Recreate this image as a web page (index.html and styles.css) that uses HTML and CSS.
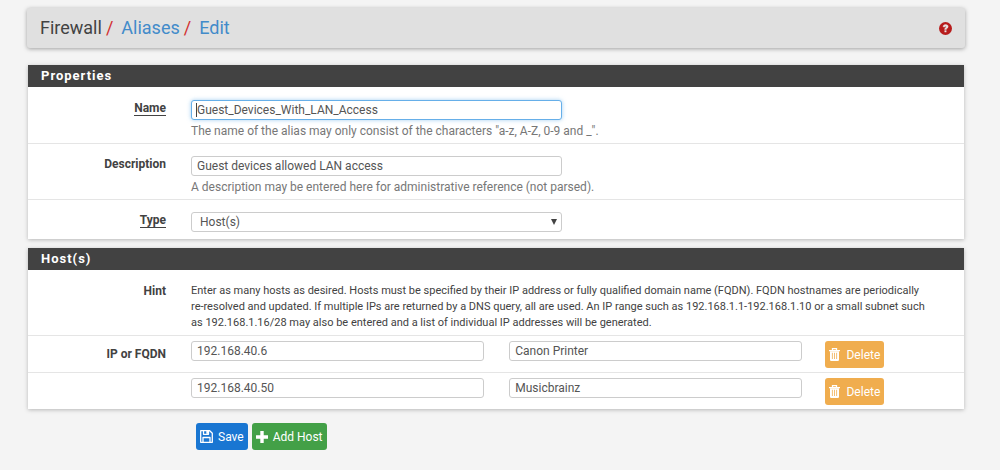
FILE: index.html
```html
<!DOCTYPE html>
<html lang="en">
<head>
<meta charset="utf-8">
<title>Firewall: Aliases: Edit</title>
<link rel="stylesheet" href="styles.css">
</head>
<body>
<header class="page-header">
  <nav class="breadcrumb" aria-label="Breadcrumb">
    <span>Firewall</span><span class="sep">/</span><a href="#">Aliases</a><span class="sep">/</span><a href="#">Edit</a>
  </nav>
  <a class="help-link" href="#" aria-label="Help">
    <svg viewBox="0 0 14 14" width="13" height="13"><circle cx="7" cy="7" r="7" fill="#b71c1c"/><path d="M4.300 5.200C4.500 3.600 5.600 2.700 7.100 2.700c1.600 0 2.800.9 2.800 2.300 0 1.700-2 1.700-2 3.100H6C6 6.300 7.700 6.200 7.700 5.200c0-.8-1.200-.8-1.500.3z" fill="#e8e4e4" stroke="#e8e4e4" stroke-width=".4"/><rect x="5.900" y="9" width="2.100" height="2" fill="#e8e4e4"/></svg>
  </a>
</header>
<form class="alias-form">
  <section class="panel">
    <h2 class="panel-title">Properties</h2>
    <div class="row">
      <label class="label required" for="name"><span>Name</span></label>
      <div class="cell">
        <input class="control active" id="name" type="text" value="Guest_Devices_With_LAN_Access">
      </div>
      <p class="help">The name of the alias may only consist of the characters "a-z, A-Z, 0-9 and _".</p>
    </div>
    <div class="row">
      <label class="label" for="descr">Description</label>
      <div class="cell">
        <input class="control" id="descr" type="text" value="Guest devices allowed LAN access">
      </div>
      <p class="help">A description may be entered here for administrative reference (not parsed).</p>
    </div>
    <div class="row type-row">
      <label class="label required" for="type"><span>Type</span></label>
      <div class="cell">
        <select class="control select" id="type"><option>Host(s)</option></select>
      </div>
    </div>
  </section>
  <section class="panel">
    <h2 class="panel-title">Host(s)</h2>
    <div class="row">
      <div class="label">Hint</div>
      <p class="hint">Enter as many hosts as desired. Hosts must be specified by their IP address or fully qualified domain name (FQDN). FQDN hostnames are periodically re-resolved and updated. If multiple IPs are returned by a DNS query, all are used. An IP range such as 192.168.1.1-192.168.1.10 or a small subnet such as 192.168.1.16/28 may also be entered and a list of individual IP addresses will be generated.</p>
    </div>
    <div class="row host-row">
      <label class="label" for="address0">IP or FQDN</label>
      <div class="cell"><input class="control" id="address0" type="text" value="192.168.40.6"></div>
      <div class="cell"><input class="control" type="text" aria-label="Description of host 1" value="Canon Printer"></div>
      <div class="row-action">
        <button class="btn btn-delete" type="button"><svg viewBox="0 0 11 13" width="11" height="13"><path d="M3.500 2V.6h4V2M0 2.600h11" fill="none" stroke="#fff" stroke-width="1.300"/><path d="M1 3.200h9v8.600q0 1.200-1.200 1.200H2.200Q1 13 1 11.800z" fill="#fff"/><path d="M3.400 4.800v6.200M5.500 4.800v6.200M7.600 4.800v6.200" stroke="#f0ad4e" stroke-width=".8"/></svg>Delete</button>
      </div>
    </div>
    <div class="row host-row">
      <span class="label"></span>
      <div class="cell"><input class="control" type="text" aria-label="IP or FQDN of host 2" value="192.168.40.50"></div>
      <div class="cell"><input class="control" type="text" aria-label="Description of host 2" value="Musicbrainz"></div>
      <div class="row-action">
        <button class="btn btn-delete" type="button"><svg viewBox="0 0 11 13" width="11" height="13"><path d="M3.500 2V.6h4V2M0 2.600h11" fill="none" stroke="#fff" stroke-width="1.300"/><path d="M1 3.200h9v8.600q0 1.200-1.200 1.200H2.200Q1 13 1 11.800z" fill="#fff"/><path d="M3.400 4.800v6.200M5.500 4.800v6.200M7.600 4.800v6.200" stroke="#f0ad4e" stroke-width=".8"/></svg>Delete</button>
      </div>
    </div>
  </section>
  <div class="actions">
    <button class="btn btn-save" type="submit"><svg viewBox="0 0 13 13" width="13" height="13"><path d="M.7.7h9l2.600 2.600v9H.7zM3.500.7v3.600h5V.7M3 12.300V7.500h7v4.800" fill="none" stroke="#fff" stroke-width="1.300" stroke-linejoin="round"/><path d="M6.300.8h2v3h-2z" fill="#fff"/></svg>Save</button>
    <button class="btn btn-add" type="button"><svg viewBox="0 0 12 12" width="12" height="12"><path d="M6 0v12M0 6h12" stroke="#fff" stroke-width="3.400"/></svg>Add Host</button>
  </div>
</form>
</body>
</html>
```
FILE: styles.css
```css
* { box-sizing: border-box; }

body {
  margin: 0;
  padding: 8px 36px 16px 28px;
  background: #f4f4f4;
  color: #424242;
  font: 12px/16px Roboto, "Liberation Sans", sans-serif;
}

.page-header {
  display: flex;
  justify-content: space-between;
  align-items: center;
  height: 40px;
  margin: 0 -1px 17px;
  padding: 0 13px;
  background: #e0e0e0;
  border-radius: 3px;
  box-shadow: 0 1px 4px rgba(0, 0, 0, .35);
}

.breadcrumb {
  display: flex;
  font-size: 18px;
  line-height: 24px;
}

.breadcrumb a { color: #428bca; text-decoration: none; }
.sep { margin: 0 8px 0 4px; color: #d32f2f; }
.help-link { display: flex; }

.panel {
  margin-bottom: 9px;
  background: #fff;
  box-shadow: 0 1px 4px rgba(0, 0, 0, .25);
}

.panel-title {
  margin: 0;
  padding: 3px 13px;
  background: #424242;
  color: #fff;
  font-size: 13px;
  font-weight: 700;
  line-height: 16px;
  letter-spacing: 1px;
}

.row {
  display: grid;
  grid-template-columns: 2fr 5fr 5fr;
  padding: 12px 0 4px;
  border-top: 1px solid #e5e5e5;
}

.panel-title + .row { border-top-color: #fff; }
.row > * { min-width: 0; }
.type-row { padding-bottom: 7px; }

.label {
  padding-right: 18px;
  font-weight: 700;
  text-align: right;
}

.required span { border-bottom: 1px solid #424242; }
.cell { padding: 0 12px 0 7px; }

.control {
  display: block;
  width: 100%;
  height: 20px;
  padding: 0 5px;
  border: 1px solid #ccc;
  border-radius: 3px;
  background: #fff;
  color: #555;
  font: inherit;
  outline: 0;
}

/* Focused field with its text cursor */
.active {
  border-color: #66afe9;
  background: #fff linear-gradient(#424242, #424242) 4px 50% / 1px 14px no-repeat;
  box-shadow: 0 0 4px rgba(102, 175, 233, .6);
}

.select {
  padding: 0 8px;
  appearance: none;
  background: #fff url("data:image/svg+xml,%3Csvg xmlns='http://www.w3.org/2000/svg' width='6' height='6'%3E%3Cpath d='M0 0h6L3 6z' fill='%23424242'/%3E%3C/svg%3E") right 4px center no-repeat;
}

.help {
  grid-column: 2 / -1;
  margin: 3px 0 0;
  padding: 0 12px 0 7px;
  color: #777;
}

.hint {
  grid-column: 2 / -1;
  margin: 0;
  padding: 0 32px 0 7px;
  font-size: 11px;
}

.host-row {
  grid-template-columns: 16.667% 34% 34% 1fr;
  padding: 5px 0 4px;
}

.host-row .label { padding-top: 5px; }
.host-row .cell { padding-right: 18px; }
.row-action { padding-left: 5px; }

.btn {
  display: inline-flex;
  align-items: center;
  gap: 5px;
  height: 27px;
  padding: 0 4px;
  border: 0;
  border-radius: 3px;
  color: #fff;
  font: inherit;
  white-space: nowrap;
}

.btn-delete { gap: 6px; background: #f0ad4e; }
.btn-save { background: #1976d2; }
.btn-add { background: #43a047; }

.actions {
  display: flex;
  gap: 4px;
  margin-top: 14px;
  padding-left: 168px;
}
```
